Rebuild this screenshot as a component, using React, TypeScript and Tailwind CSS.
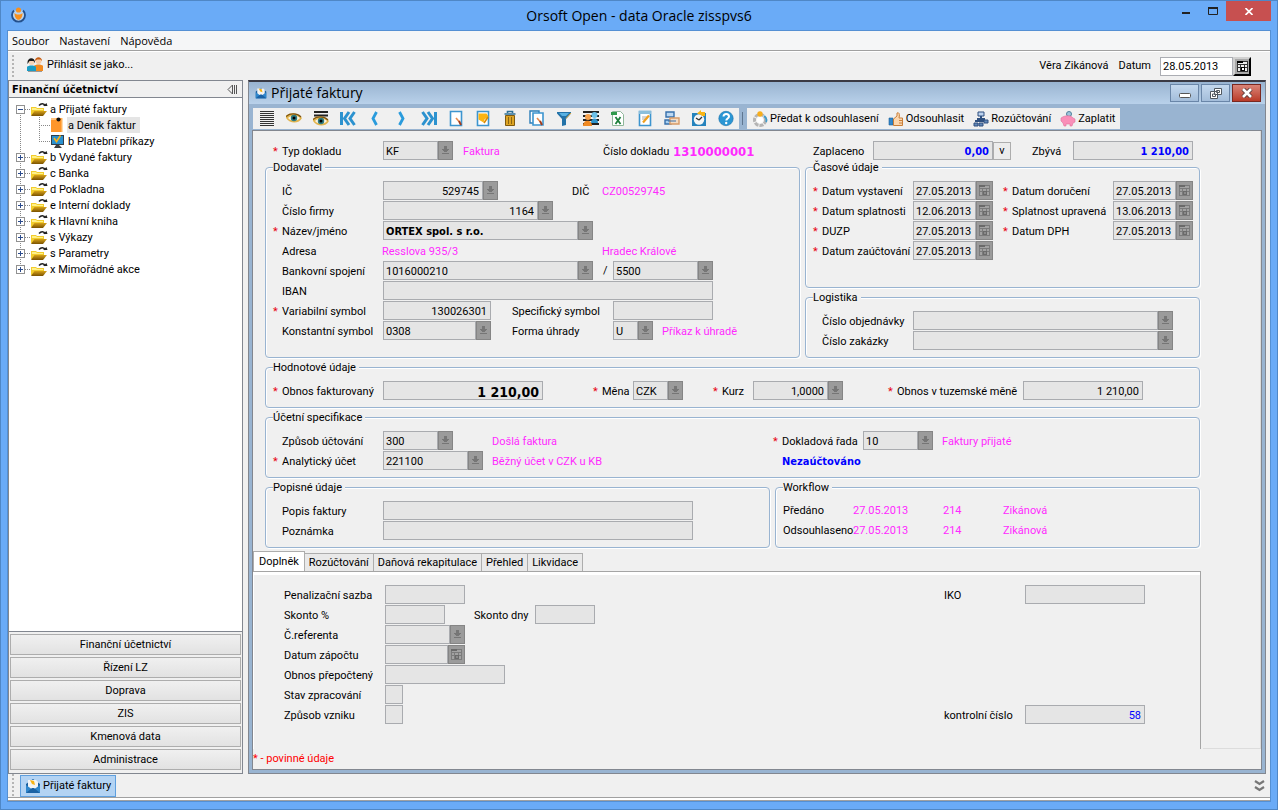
import { useId, useState, type ReactNode } from 'react'

type Kind = 'plain' | 'lov' | 'date'

const BOLD = "font-bold font-['DejaVu_Sans_Condensed','DejaVu_Sans',sans-serif]"

/* ---------- small shared pieces ---------- */

function CalendarGlyph({ dim = false }: { dim?: boolean }) {
  return (
    <svg width="13" height="13" viewBox="0 0 13 13" shapeRendering="crispEdges">
      <rect x="1" y="1" width="11" height="11" fill={dim ? '#a2a2a2' : '#eee'} />
      <path d="M1 1.500h11M1 11.500h11M1.500 1v11M11.500 1v11M1 4.500h11M1 7.500h11M4.500 4v8M8.500 4v8" stroke={dim ? '#7b7b7b' : '#333'} fill="none" />
      <rect x="1" y="1" width="6" height="2" fill={dim ? '#6a6a6a' : '#000'} />
      <path d="M5 7h3v3h-3z" fill={dim ? '#8a8a8a' : '#fff'} stroke={dim ? '#6a6a6a' : '#000'} />
    </svg>
  )
}

function LovGlyph() {
  return (
    <svg width="9" height="11" viewBox="0 0 9 11" shapeRendering="crispEdges">
      <path d="M3 1h3v3h2v1h-1v1h-1v1h-3v-1h-1v-1h-1v-1h2z" fill="#767676" />
      <rect x="1" y="8" width="7" height="1" fill="#767676" />
    </svg>
  )
}

function Label({ text, req, w, htmlFor }: { text: string; req?: boolean; w: string; htmlFor?: string }) {
  return (
    <label htmlFor={htmlFor} className={`flex shrink-0 pt-[2px] whitespace-nowrap ${w}`}>
      <span className="w-[9px] shrink-0 text-red-600">{req ? '*' : ''}</span>
      <span>{text}</span>
    </label>
  )
}

interface FieldProps {
  label: string
  hideLabel?: boolean
  lw?: string
  w: string
  value?: string
  req?: boolean
  kind?: Kind
  input?: string
}

function Field({ label, hideLabel, lw = 'w-[110px]', w, value = '', req, kind = 'plain', input = '' }: FieldProps) {
  const id = useId()
  return (
    <div className="flex shrink-0 items-center">
      {!hideLabel && <Label text={label} req={req} w={lw} htmlFor={id} />}
      <div className={`flex h-[19px] ${w}`}>
        <input
          id={id}
          readOnly
          aria-label={hideLabel ? label : undefined}
          defaultValue={value}
          className={`min-w-0 flex-1 border border-[#a9abaf] bg-[#e5e5e5] pt-[2px] pr-[3px] pl-[2px] outline-none ${input}`}
        />
        {kind !== 'plain' && (
          <button
            type="button"
            aria-label={label}
            className={`flex shrink-0 items-center justify-center border border-[#858585] bg-[#9b9b9b] ${kind === 'date' ? 'w-[17px]' : 'w-[15px]'}`}
          >
            {kind === 'date' ? <CalendarGlyph dim /> : <LovGlyph />}
          </button>
        )}
      </div>
    </div>
  )
}

function Row({ children }: { children?: ReactNode }) {
  return <div className="flex h-[19px] items-center">{children}</div>
}

function Slot({ w, children }: { w: string; children?: ReactNode }) {
  return <div className={`flex shrink-0 items-center ${w}`}>{children}</div>
}

function Info({ children, className = '' }: { children: ReactNode; className?: string }) {
  return <span className={`pt-[2px] whitespace-nowrap text-[#ff29ff] ${className}`}>{children}</span>
}

function Group({ title, children, className = '' }: { title: string; children: ReactNode; className?: string }) {
  return (
    <fieldset
      className={`min-w-0 rounded-[4px] border border-[#99b4d1] pl-[7px] shadow-[1px_1px_0_#fff,inset_1px_1px_0_#fff] ${className}`}
    >
      <legend className="h-[15px] bg-[#f0f0f0] pt-px pr-[3px]">{title}</legend>
      <div className="flex flex-col gap-px pt-[6px]">{children}</div>
    </fieldset>
  )
}

/* ---------- icons ---------- */

function MailIcon({ size = 16 }: { size?: number }) {
  return (
    <svg width={size} height={size} viewBox="0 0 16 16">
      <path d="M1 6 8 1l7 5v9H1z" fill="#1b5f9e" />
      <path d="M3 2h8l2 2v7H3z" fill="#f4f4f4" />
      <path d="M5 2l4 1 1 4-3-1z" fill="#f8b414" />
      <path d="M1 7l7 5 7-5v8H1z" fill="#2f86cc" />
      <path d="M1 15l6-5h2l6 5z" fill="#1a62a5" />
    </svg>
  )
}

function FolderIcon() {
  return (
    <svg width="17" height="16" viewBox="0 0 17 16">
      <defs>
        <linearGradient id="folder" x1="0" y1="0" x2="0" y2="1">
          <stop offset="0" stopColor="#d7a21a" />
          <stop offset="1" stopColor="#7a5200" />
        </linearGradient>
      </defs>
      <path d="M0 6h5l1 1h7v7H0z" fill="#f2cd2c" />
      <path d="M1 7h4l1 1h6v1H1z" fill="#fff08a" />
      <path d="M3.500 10H16l-4 5H0z" fill="url(#folder)" />
      <path d="M8 4.500c2-2.500 5-2.500 6.500.5" stroke="#222" strokeWidth="1.500" fill="none" />
      <path d="M12 5h4.500l-1-3z" fill="#222" />
    </svg>
  )
}

function JournalIcon() {
  return (
    <svg width="13" height="16" viewBox="0 0 13 16">
      <path d="M1 1h11v14H1z" fill="#ff962a" />
      <path d="M1 1h5v2H1z" fill="#ffc27c" />
      <circle cx="8.500" cy="2.500" r="2" fill="#111" />
      <path d="M11 1h1.500v14H11z" fill="#ffb35c" />
    </svg>
  )
}

function MonitorIcon() {
  return (
    <svg width="14" height="16" viewBox="0 0 14 16">
      <path d="M1 2h13v10H1z" fill="#333f4a" />
      <path d="M2 3h11v8H2z" fill="#2a91d0" />
      <path d="M4 5l2.500 3.500 4-6" stroke="#f9b21b" strokeWidth="1.600" fill="none" />
      <path d="M6 12h3l3 3H4z" fill="#3d3d3d" />
    </svg>
  )
}

function UsersIcon() {
  return (
    <svg width="16" height="16" viewBox="0 0 16 16">
      <circle cx="11.500" cy="4" r="3" fill="#f8cba6" />
      <path d="M8 4c0-5 7-5 7 0l-1.500-1.500H10z" fill="#c65d12" />
      <path d="M7 14V9c1-2 8-2 9 0v5z" fill="#f28a1f" />
      <circle cx="4.500" cy="5" r="3" fill="#f8d5b8" />
      <path d="M.5 7C-.5-.5 8.500-.5 8 6L6.500 4h-4z" fill="#1b1b1b" />
      <path d="M0 14v-4c1-2 8-2 9 0v4z" fill="#1a9cc4" />
      <path d="M1 14.500h14" stroke="#9a9a9a" strokeWidth="1" />
    </svg>
  )
}

function Eye({ y = 0 }: { y?: number }) {
  return (
    <g transform={`translate(0 ${y})`}>
      <path d="M0 6C3 2 12 2 16 8c-3 6-12 6-16 0z" fill="#e3b54e" />
      <path d="M2 8c3-3 9-3 12 0-3 3.500-9 3.500-12 0z" fill="#f8f4e4" />
      <circle cx="8" cy="8" r="3.200" fill="#2c7a80" />
      <circle cx="8" cy="8" r="1.500" fill="#000" />
      <path d="M0 6.500C4 3 11 3 15 7" stroke="#7c5412" strokeWidth="1.200" fill="none" />
    </g>
  )
}

function Sheet({ back }: { back?: boolean }) {
  return (
    <g>
      {back && <path d="M1 1h9v12H1z" fill="#fff" stroke="#2b7db8" strokeWidth="1.400" />}
      <path d={back ? 'M4 3h10v12H4z' : 'M2.500 1.500h11v14h-11z'} fill="#fff" stroke="#3d95cf" strokeWidth="1.600" />
    </g>
  )
}

const toolIcons: { name: string; art: ReactNode }[] = [
  { name: 'Seznam', art: <path d="M1 1.500h14M1 3.500h14M1 5.500h14M1 7.500h14M1 9.500h14M1 11.500h14M1 13.500h14M1 15.500h14" stroke="#333" shapeRendering="crispEdges" /> },
  { name: 'Zobrazit', art: <Eye /> },
  { name: 'Zobrazit seznam', art: <><path d="M1 2h14M1 5.500h14" stroke="#222" strokeWidth="2" /><Eye y={3} /></> },
  { name: 'První', art: <path d="M1.500 2v13M9 2 4.500 8.500 9 15M14.500 2 10 8.500l4.500 6.500" stroke="#2c92cf" strokeWidth="3" fill="none" /> },
  { name: 'Předchozí', art: <path d="M9.500 2 6 8.500 9.500 15" stroke="#2a9bdc" strokeWidth="2.800" fill="none" /> },
  { name: 'Další', art: <path d="m5.500 2 3.500 6.500L5.500 15" stroke="#2a9bdc" strokeWidth="2.800" fill="none" /> },
  { name: 'Poslední', art: <path d="m1.500 2 4.500 6.500L1.500 15M7 2l4.500 6.500L7 15M14.500 2v13" stroke="#2c92cf" strokeWidth="3" fill="none" /> },
  { name: 'Nový', art: <><Sheet /><path d="m8 8 3 3.500" stroke="#e8894a" strokeWidth="1.600" /><path d="m11 11 2 4" stroke="#a33c1c" strokeWidth="2" /></> },
  { name: 'Upravit', art: <><Sheet /><path d="M3.500 3.500h8l2 3-4 3-1 3-5-3z" fill="#fbb413" /><path d="m9 13 4-6" stroke="#d98a08" strokeWidth="1.600" /></> },
  { name: 'Smazat', art: <><path d="M5.500 3V1.500h5V3M2.500 4h11" stroke="#2d6f96" strokeWidth="1.600" fill="none" /><path d="M3.500 5.500h9v10h-9z" fill="#dda424" stroke="#7f5a10" /><path d="M6.500 7v7M9.500 7v7" stroke="#8c6512" /></> },
  { name: 'Kopírovat', art: <><Sheet back /><path d="m8 8 3 3.500" stroke="#e8894a" strokeWidth="1.600" /><path d="m11 11 2 4" stroke="#a33c1c" strokeWidth="2" /></> },
  { name: 'Filtr', art: <><path d="M1 2h14v1.500L10 9v6l-4 1V9L1 3.500z" fill="#2372a8" /><path d="M3 3h10l-3 3H6z" fill="#59b1e2" /><path d="M10 8.500 15 3" stroke="#d9a53a" /></> },
  { name: 'Osoby', art: <><path d="M0 2h16M0 6h16M0 10h16M0 14h16" stroke="#222" strokeWidth="2" /><circle cx="5" cy="7" r="3" fill="#f6a04a" /><path d="M0 16c0-7 9-7 9 0z" fill="#f08a24" /><circle cx="11.500" cy="5" r="3" fill="#6bc0e8" /><path d="M8 13c0-6 7-6 7 0z" fill="#2f94cc" /></> },
  { name: 'Export', art: <><path d="M2.500 1.500h8l3 3v11h-11z" fill="#fff" stroke="#8fb79a" /><path d="M1 2h6v3H1z" fill="#2f9a4c" /><path d="m5.500 7 5 7M10.500 7l-5 7" stroke="#1d7f3a" strokeWidth="1.800" /></> },
  { name: 'Poznámka', art: <><Sheet /><path d="M2 1h12v3H2z" fill="#8bbfdc" /><path d="M5 7h5M5 9h3" stroke="#aaa" /><path d="m6 12.500 6-7" stroke="#f0a01e" strokeWidth="2.200" /></> },
  { name: 'Vazby', art: <><path d="M2 2h8v5H2z" fill="#bcd8f2" stroke="#3770ac" strokeWidth="1.400" /><path d="M1 10h6v4H1z" fill="#a9d0f0" stroke="#3770ac" strokeWidth="1.400" /><path d="M6 8h9v6H6z" fill="#f4dcc4" stroke="#d89a66" strokeWidth="1.400" /><path d="M4 11h8" stroke="#3770ac" /></> },
  { name: 'Navigace', art: <><path d="M1 3h14v13H1z" fill="#2583bd" /><circle cx="8" cy="9.500" r="5.200" fill="#f5f5f5" /><path d="m8 10 3-3M8 10 5 8" stroke="#333" strokeWidth="1.300" /><path d="M6 3.500 10 0v2h4v4h-3l-1-1z" fill="#f8b414" /></> },
  { name: 'Nápověda', art: <><circle cx="8" cy="8.500" r="7.200" fill="#2b96d4" stroke="#1b70aa" strokeWidth=".6" /><path d="M5.500 6.500c0-3.500 5.500-3 5.500 0 0 2-2.700 2-2.700 4" stroke="#fff" strokeWidth="2" fill="none" /><circle cx="8.200" cy="13" r="1.200" fill="#fff" /></> },
]

const actions: { text: string; art: ReactNode }[] = [
  { text: 'Předat k odsouhlasení', art: <><circle cx="8" cy="9" r="5.500" fill="#f4f4f4" stroke="#b4b4b4" strokeWidth="3" strokeDasharray="4 1" /><circle cx="8" cy="9" r="3" fill="#fff" /><circle cx="8" cy="3" r="2.700" fill="#f7ae1c" /><path d="M12 5c3 2 3 4 2 6" stroke="#3c9bcb" strokeWidth="1.800" fill="none" /></> },
  { text: 'Odsouhlasit', art: <><path d="M1 7h4v7H1z" fill="#2f86cc" stroke="#1f5f96" strokeWidth=".6" /><path d="M5.500 8 9 5V2c2-1 3 1 2 5h3.500v7.500h-9z" fill="#fbd6ae" stroke="#c97f38" /><path d="M11 9.500h3.500M11 12h3.500" stroke="#c97f38" /></> },
  { text: 'Rozúčtování', art: <><path d="M5 1h6v4H5z" fill="#bcd2ee" stroke="#2e4f7e" /><path d="M8 5v3M2 10h12M4 8h8" stroke="#2e4f7e" strokeWidth="2" /><path d="M1 12h4v3H1zM6 12h4v3H6zM11 9h4v3h-4z" fill="#6288b8" stroke="#2e4f7e" /></> },
  { text: 'Zaplatit', art: <><circle cx="9" cy="3" r="2.500" fill="#9fc6dc" stroke="#4f7f9b" /><path d="M1 7c4-3 10-3 12 0l2 1v3l-2 1-1 3h-2v-2H6v2H4l-1-3-2-2z" fill="#f98fb8" stroke="#e06f9c" strokeWidth=".6" /></> },
]

/* ---------- left panel ---------- */

const tree = [
  { text: 'a Přijaté faktury', open: true },
  { text: 'b Vydané faktury' },
  { text: 'c Banka' },
  { text: 'd Pokladna' },
  { text: 'e Interní doklady' },
  { text: 'k Hlavní kniha' },
  { text: 's Výkazy' },
  { text: 's Parametry' },
  { text: 'x Mimořádné akce' },
]

const modules = ['Finanční účetnictví', 'Řízení LZ', 'Doprava', 'ZIS', 'Kmenová data', 'Administrace']

function Expander({ open, first, last }: { open?: boolean; first?: boolean; last?: boolean }) {
  return (
    <svg width="15" height="16" viewBox="0 0 15 16" shapeRendering="crispEdges" className="shrink-0">
      <path d={first ? 'M4.500 8v8M9 8.500h6' : last ? 'M4.500 0v8M9 8.500h6' : 'M4.500 0v16M9 8.500h6'} stroke="#888" strokeDasharray="1 1" />
      <rect x=".5" y="4.500" width="8" height="8" fill="#fff" stroke="#919191" />
      <path d={open ? 'M2 8.500h5' : 'M2 8.500h5M4.500 6v5'} stroke="#2b4b8c" />
    </svg>
  )
}

function Branch({ last }: { last?: boolean }) {
  return (
    <svg width="34" height="16" viewBox="0 0 34 16" shapeRendering="crispEdges" className="shrink-0">
      <path d={last ? 'M4.500 0v16M23.500 0v8M23 8.500h11' : 'M4.500 0v16M23.500 0v16M23 8.500h11'} stroke="#888" strokeDasharray="1 1" fill="none" />
    </svg>
  )
}

function SidePanel() {
  return (
    <aside className="flex w-[235px] shrink-0 flex-col border border-[#828790] bg-[#f0f0f0]">
      <div className="flex h-[17px] items-center justify-between border-b border-[#828790] pr-1 pl-[3px]">
        <h2 className={`pt-[2px] text-[11px] ${BOLD}`}>Finanční účetnictví</h2>
        <button type="button" aria-label="Skrýt panel">
          <svg width="11" height="11" viewBox="0 0 11 11">
            <path d="M5.500 1v9L1 5.500zM7.500 1v9M9.500 1v9" fill="none" stroke="#555" />
          </svg>
        </button>
      </div>
      <ul className="min-h-0 flex-1 overflow-hidden border-b border-[#828790] bg-white pt-[3px] pl-[7px]">
        {tree.map((n, i) => (
          <li key={n.text}>
            <div className="flex h-4 items-center">
              <Expander open={n.open} first={i === 0} last={i === tree.length - 1} />
              <FolderIcon />
              <span className="pt-[2px] pl-[2px]">{n.text}</span>
            </div>
            {n.open && (
              <ul>
                <li className="flex h-4 items-center">
                  <Branch />
                  <JournalIcon />
                  <span className="ml-1 h-4 bg-[#e5e5e5] pt-[2px] pr-1 pl-px">a Deník faktur</span>
                </li>
                <li className="flex h-4 items-center">
                  <Branch last />
                  <MonitorIcon />
                  <span className="pt-[2px] pl-1">b Platební příkazy</span>
                </li>
              </ul>
            )}
          </li>
        ))}
      </ul>
      <div className="flex flex-col gap-[2px] px-px pt-[2px] pb-[3px]">
        {modules.map((m) => (
          <button key={m} type="button" className="h-[21px] border border-[#adadad] bg-linear-to-b from-[#f0f0f0] to-[#e2e2e2]">
            {m}
          </button>
        ))}
      </div>
    </aside>
  )
}

/* ---------- invoice form ---------- */

const tabs = ['Doplněk', 'Rozúčtování', 'Daňová rekapitulace', 'Přehled', 'Likvidace']

function InvoiceForm() {
  return (
    <form className="flex max-w-[947px] flex-col pt-[10px]">
      <div className="pl-5">
        <Row>
          <Slot w="w-[190px]"><Field label="Typ dokladu" req w="w-[70px]" value="KF" kind="lov" /></Slot>
          <Slot w="w-[131px]"><Info>Faktura</Info></Slot>
          <Label text="Číslo dokladu" w="w-[79px]" />
          <Slot w="w-[131px]"><Info className={`text-[13px] ${BOLD}`}>1310000001</Info></Slot>
          <Field label="Zaplaceno" lw="w-[69px]" w="w-[120px]" value="0,00" input={`text-right text-[#0000ff] ${BOLD}`} />
          <button type="button" className="mr-3 h-[18px] w-[18px] border border-[#adadad] bg-[#ececec] text-center">v</button>
          <Field label="Zbývá" lw="w-[50px]" w="w-[120px]" value="1 210,00" input={`text-right text-[#0000ff] ${BOLD}`} />
        </Row>
      </div>

      <div className="flex flex-col gap-[2px] pl-3">
        <div className="grid grid-cols-[535fr_395fr] gap-x-[5px]">
          <Group title="Dodavatel" className="pb-[17px]">
            <Row>
              <Slot w="w-[290px]"><Field label="IČ" w="w-[115px]" value="529745" kind="lov" input="text-right" /></Slot>
              <Label text="DIČ" w="w-[39px]" />
              <Info>CZ00529745</Info>
            </Row>
            <Row><Field label="Číslo firmy" w="w-[170px]" value="1164" kind="lov" input="text-right" /></Row>
            <Row><Field label="Název/jméno" req w="w-[210px]" value="ORTEX spol. s r.o." kind="lov" input={BOLD} /></Row>
            <Row>
              <Label text="Adresa" w="w-[109px]" />
              <Slot w="w-[220px]"><Info>Resslova 935/3</Info></Slot>
              <Info>Hradec Králové</Info>
            </Row>
            <Row>
              <Slot w="w-[330px]"><Field label="Bankovní spojení" w="w-[210px]" value="1016000210" kind="lov" /></Slot>
              <Slot w="w-[10px]">/</Slot>
              <Field label="Kód banky" hideLabel w="w-[100px]" value="5500" kind="lov" />
            </Row>
            <Row><Field label="IBAN" w="w-[330px]" /></Row>
            <Row>
              <Slot w="w-[230px]"><Field label="Variabilní symbol" req w="w-[108px]" value="130026301" input="text-right" /></Slot>
              <Field label="Specifický symbol" w="w-[100px]" />
            </Row>
            <Row>
              <Slot w="w-[230px]"><Field label="Konstantní symbol" w="w-[108px]" value="0308" kind="lov" /></Slot>
              <Slot w="w-[159px]"><Field label="Forma úhrady" w="w-[40px]" value="U" kind="lov" /></Slot>
              <Info>Příkaz k úhradě</Info>
            </Row>
          </Group>

          <div className="flex flex-col justify-between">
            <Group title="Časové údaje" className="pb-[27px]">
              <Row>
                <Slot w="w-[190px]"><Field label="Datum vystavení" req lw="w-[100px]" w="w-[80px]" value="27.05.2013" kind="date" /></Slot>
                <Field label="Datum doručení" req w="w-[80px]" value="27.05.2013" kind="date" />
              </Row>
              <Row>
                <Slot w="w-[190px]"><Field label="Datum splatnosti" req lw="w-[100px]" w="w-[80px]" value="12.06.2013" kind="date" /></Slot>
                <Field label="Splatnost upravená" req w="w-[80px]" value="13.06.2013" kind="date" />
              </Row>
              <Row>
                <Slot w="w-[190px]"><Field label="DUZP" req lw="w-[100px]" w="w-[80px]" value="27.05.2013" kind="date" /></Slot>
                <Field label="Datum DPH" req w="w-[80px]" value="27.05.2013" kind="date" />
              </Row>
              <Row><Field label="Datum zaúčtování" req lw="w-[100px]" w="w-[80px]" value="27.05.2013" kind="date" /></Row>
            </Group>
            <Group title="Logistika" className="pb-[7px]">
              <Row><Field label="Číslo objednávky" lw="w-[100px]" w="w-[260px]" kind="lov" /></Row>
              <Row><Field label="Číslo zakázky" lw="w-[100px]" w="w-[260px]" kind="lov" /></Row>
            </Group>
          </div>
        </div>

        <Group title="Hodnotové údaje" className="pb-[7px]">
          <Row>
            <Slot w="w-[320px]"><Field label="Obnos fakturovaný" req w="w-[160px]" value="1 210,00" input={`text-right text-[14px] ${BOLD}`} /></Slot>
            <Slot w="w-[120px]"><Field label="Měna" req lw="w-[40px]" w="w-[50px]" value="CZK" kind="lov" /></Slot>
            <Slot w="w-[175px]"><Field label="Kurz" req lw="w-[40px]" w="w-[90px]" value="1,0000" kind="lov" input="text-right" /></Slot>
            <Field label="Obnos v tuzemské měně" req lw="w-[135px]" w="w-[120px]" value="1 210,00" input="text-right" />
          </Row>
        </Group>

        <Group title="Účetní specifikace" className="pb-[7px]">
          <Row>
            <Slot w="w-[219px]"><Field label="Způsob účtování" w="w-[70px]" value="300" kind="lov" /></Slot>
            <Slot w="w-[281px]"><Info>Došlá faktura</Info></Slot>
            <Slot w="w-[169px]"><Field label="Dokladová řada" req lw="w-[90px]" w="w-[70px]" value="10" kind="lov" /></Slot>
            <Info>Faktury přijaté</Info>
          </Row>
          <Row>
            <Slot w="w-[219px]"><Field label="Analytický účet" req w="w-[100px]" value="221100" kind="lov" /></Slot>
            <Slot w="w-[290px]"><Info>Běžný účet v CZK u KB</Info></Slot>
            <span className={`pt-[2px] text-[#0000ff] ${BOLD}`}>Nezaúčtováno</span>
          </Row>
        </Group>

        <div className="grid grid-cols-[505fr_425fr] gap-x-[5px]">
          <Group title="Popisné údaje" className="pb-[7px]">
            <Row><Field label="Popis faktury" w="w-[310px]" /></Row>
            <Row><Field label="Poznámka" w="w-[310px]" /></Row>
          </Group>
          <Group title="Workflow" className="pb-[6px]">
            <table className="w-[300px] table-fixed border-collapse">
              <tbody>
                {['Předáno', 'Odsouhlaseno'].map((step) => (
                  <tr key={step} className="h-5">
                    <th scope="row" className="w-[70px] p-0 text-left font-normal whitespace-nowrap">{step}</th>
                    <td className="w-[90px] p-0 text-[#ff29ff]">27.05.2013</td>
                    <td className="w-[60px] p-0 text-[#ff29ff]">214</td>
                    <td className="p-0 text-[#ff29ff]">Zikánová</td>
                  </tr>
                ))}
              </tbody>
            </table>
          </Group>
        </div>
      </div>
    </form>
  )
}

function DetailTabs() {
  const [active, setActive] = useState(tabs[0])
  return (
    <section className="flex min-h-0 flex-1 flex-col">
      <div role="tablist" className="flex h-5 items-end">
        {tabs.map((t) => (
          <button
            key={t}
            type="button"
            role="tab"
            aria-selected={t === active}
            onClick={() => setActive(t)}
            className={
              t === active
                ? 'h-5 border border-b-0 border-[#adadad] bg-white px-[5px]'
                : 'h-[18px] border border-b-0 border-l-0 border-[#adadad] bg-[#e9e9e9] px-1 pt-px'
            }
          >
            {t}
          </button>
        ))}
      </div>
      <div className="flex min-h-0 flex-1">
        <div role="tabpanel" className="w-[948px] border-t border-r border-[#a5a5a5]">
          <div className="flex h-full flex-col gap-px border-t-[3px] border-l border-white pt-[10px] pl-[21px]">
            <Row>
              <Slot w="w-[660px]"><Field label="Penalizační sazba" w="w-[80px]" /></Slot>
              <Field label="IKO" lw="w-[90px]" w="w-[120px]" />
            </Row>
            <Row>
              <Slot w="w-[190px]"><Field label="Skonto %" w="w-[60px]" /></Slot>
              <Field label="Skonto dny" lw="w-[70px]" w="w-[60px]" />
            </Row>
            <Row><Field label="Č.referenta" w="w-[80px]" kind="lov" /></Row>
            <Row><Field label="Datum zápočtu" w="w-[80px]" kind="date" /></Row>
            <Row><Field label="Obnos přepočtený" w="w-[120px]" /></Row>
            <Row><Field label="Stav zpracování" w="w-[18px]" /></Row>
            <Row>
              <Slot w="w-[660px]"><Field label="Způsob vzniku" w="w-[18px]" /></Slot>
              <Field label="kontrolní číslo" lw="w-[90px]" w="w-[120px]" value="58" input="text-right text-[#0000ff]" />
            </Row>
          </div>
        </div>
        <div className="ml-[2px] flex-1 border-b border-[#dcdcdc]" />
      </div>
    </section>
  )
}

/* ---------- inner window ---------- */

function InvoiceWindow() {
  const ctl = 'flex h-[18px] w-[29px] items-center justify-center border'
  return (
    <main className="flex min-w-0 flex-1 flex-col border border-t-2 border-[#828790] border-t-[#3a3a44] bg-[#99b4d1] px-[3px] pb-[3px]">
      <div className="-mx-[3px] flex h-[22px] items-center bg-linear-to-b from-[#99b4d1] to-[#b9d1ea] pr-1 pl-[6px]">
        <MailIcon size={12} />
        <h1 className="flex-1 pl-1 font-['Open_Sans',sans-serif] text-[14px]">Přijaté faktury</h1>
        <div className="flex gap-[2px]">
          <button type="button" aria-label="Minimalizovat" className={`${ctl} border-[#6a86a8] bg-linear-to-b from-[#c4d8ee] to-[#a3bdda]`}>
            <svg width="12" height="5" className="mt-1"><rect x=".5" y=".5" width="11" height="4" rx="1" fill="#fff" stroke="#555" /></svg>
          </button>
          <button type="button" aria-label="Obnovit" className={`${ctl} border-[#6a86a8] bg-linear-to-b from-[#c4d8ee] to-[#a3bdda]`}>
            <svg width="12" height="11" viewBox="0 0 12 11" fill="#fff" stroke="#505860">
              <path d="M4.500.5h7v6h-7zM6.500 2.500h3v2h-3zM.5 3.500h7v7h-7zM2.500 6h3v2.500h-3z" />
            </svg>
          </button>
          <button type="button" aria-label="Zavřít" className={`${ctl} border-[#7a2820] bg-linear-to-b from-[#d98377] to-[#b93a28]`}>
            <svg width="12" height="10" viewBox="0 0 12 10">
              <path d="m2 1 8 8M10 1 2 9" stroke="#5b3a3a" strokeWidth="4.400" />
              <path d="m2 1 8 8M10 1 2 9" stroke="#fff" strokeWidth="2.600" />
            </svg>
          </button>
        </div>
      </div>

      <div className="mt-1 mb-px flex h-[21px] shrink-0 items-stretch pl-px">
        <div role="toolbar" className="flex bg-[#f0f0f0]">
          {toolIcons.map((t) => (
            <button key={t.name} type="button" aria-label={t.name} className="flex w-[27px] items-center justify-center">
              <svg width="16" height="17" viewBox="0 0 16 17">{t.art}</svg>
            </button>
          ))}
        </div>
        <div className="my-1 mr-1 ml-[3px] w-px bg-[#5f7690]" />
        <div role="toolbar" className="flex gap-[9px] bg-[#f0f0f0] px-[5px]">
          {actions.map((a) => (
            <button key={a.text} type="button" className="flex items-center gap-[2px] whitespace-nowrap">
              <svg width="16" height="16" viewBox="0 0 16 16">{a.art}</svg>
              {a.text}
            </button>
          ))}
        </div>
      </div>

      <div className="flex min-h-0 flex-1 flex-col overflow-hidden border border-[#828790] bg-[#f0f0f0]">
        <div className="flex min-h-0 flex-1 flex-col gap-[3px] border-r border-[#dcdcdc]">
          <InvoiceForm />
          <DetailTabs />
        </div>
        <p className="h-5 pt-[3px] text-[#ff0000]">* - povinné údaje</p>
      </div>
    </main>
  )
}

function Grip() {
  return <div className="w-[2px] self-stretch bg-[repeating-linear-gradient(#b5b5b5_0_2px,transparent_2px_4px)]" />
}

export default function App() {
  const dateId = useId()
  return (
    <div className="flex h-screen flex-col overflow-hidden border border-[#4f87c6] bg-[#6aabf7] px-[6px] pb-[7px] font-['Roboto','Liberation_Sans',sans-serif] text-[11px] leading-[14px] text-black">
      <header className="grid h-[29px] shrink-0 grid-cols-[1fr_auto_1fr]">
        <svg width="17" height="17" viewBox="0 0 17 17" className="mt-[6px] ml-[3px]">
          <path d="M4 3.500a6.500 6.500 0 1 0 9 0" fill="#b9d3ee" stroke="#24508c" strokeWidth="1.800" />
          <circle cx="8.500" cy="3" r="2.600" fill="#f7901e" />
          <path d="M4.500 6c2 2 6 2 8 0 0 9-8 9-8 0z" fill="#f7901e" />
        </svg>
        <h1 className="pt-[5px] font-['Open_Sans',sans-serif] text-[14px] leading-[20px]">Orsoft Open - data Oracle zisspvs6</h1>
        <div className="flex h-5 justify-end">
          <button type="button" aria-label="Minimalizovat" className="flex w-[27px] items-center justify-center pt-1">
            <svg width="8" height="2"><rect width="8" height="2" fill="#222" /></svg>
          </button>
          <button type="button" aria-label="Maximalizovat" className="flex w-[27px] items-center justify-center">
            <svg width="10" height="8"><path d="M.5 1h9v6.500h-9z" fill="none" stroke="#222" /><path d="M0 1h10" stroke="#222" strokeWidth="2" /></svg>
          </button>
          <button type="button" aria-label="Zavřít" className="flex w-[45px] items-center justify-center bg-[#c75050]">
            <svg width="8" height="7"><path d="m.5 0 7 7M7.500 0l-7 7" stroke="#fff" strokeWidth="1.600" /></svg>
          </button>
        </div>
      </header>

      <div className="flex min-h-0 flex-1 flex-col border border-[#5490d4] bg-[#f0f0f0]">
        <nav className="flex h-5 shrink-0 items-center gap-[10px] border-b border-[#a0a0a0] bg-[#f5f6f7] pl-1 font-['Open_Sans',sans-serif]">
          <a href="#soubor">Soubor</a>
          <a href="#nastaveni">Nastavení</a>
          <a href="#napoveda">Nápověda</a>
        </nav>

        <div className="flex h-[29px] shrink-0 items-center border-t border-white py-[3px] pr-[19px] pl-1">
          <Grip />
          <button type="button" className="mb-[2px] ml-[13px] flex items-center gap-1">
            <UsersIcon />
            Přihlásit se jako...
          </button>
          <span className="mr-[10px] ml-auto">Věra Zikánová</span>
          <label htmlFor={dateId} className="mr-[9px]">Datum</label>
          <input id={dateId} defaultValue="28.05.2013" className="h-[19px] w-[73px] border border-[#abadb3] bg-white px-[2px] outline-none" />
          <button type="button" aria-label="Kalendář" className="flex h-[19px] w-[18px] items-center justify-center border-2 border-t-[#d0d0d0] border-r-black border-b-black border-l-[#d0d0d0] bg-[#a8a8a8]">
            <CalendarGlyph />
          </button>
        </div>

        <div className="flex min-h-0 flex-1 gap-[5px] pr-1">
          <SidePanel />
          <InvoiceWindow />
        </div>

        <footer className="flex h-6 shrink-0 items-center border-b border-[#a0a0a0] pr-[5px] pl-1">
          <Grip />
          <button type="button" className="ml-[6px] flex h-[22px] items-center gap-[2px] border border-[#5e9fde] bg-[#b3d3f3] px-1">
            <MailIcon />
            Přijaté faktury
          </button>
          <button type="button" aria-label="Další okna" className="ml-auto">
            <svg width="11" height="12" viewBox="0 0 11 12"><path d="m1 1 4.500 3L10 1M1 7l4.500 3L10 7" stroke="#777" strokeWidth="2.200" fill="none" /></svg>
          </button>
        </footer>
        <div className="h-[3px] shrink-0 border-b border-[#a0a0a0] bg-white" />
      </div>
    </div>
  )
}
